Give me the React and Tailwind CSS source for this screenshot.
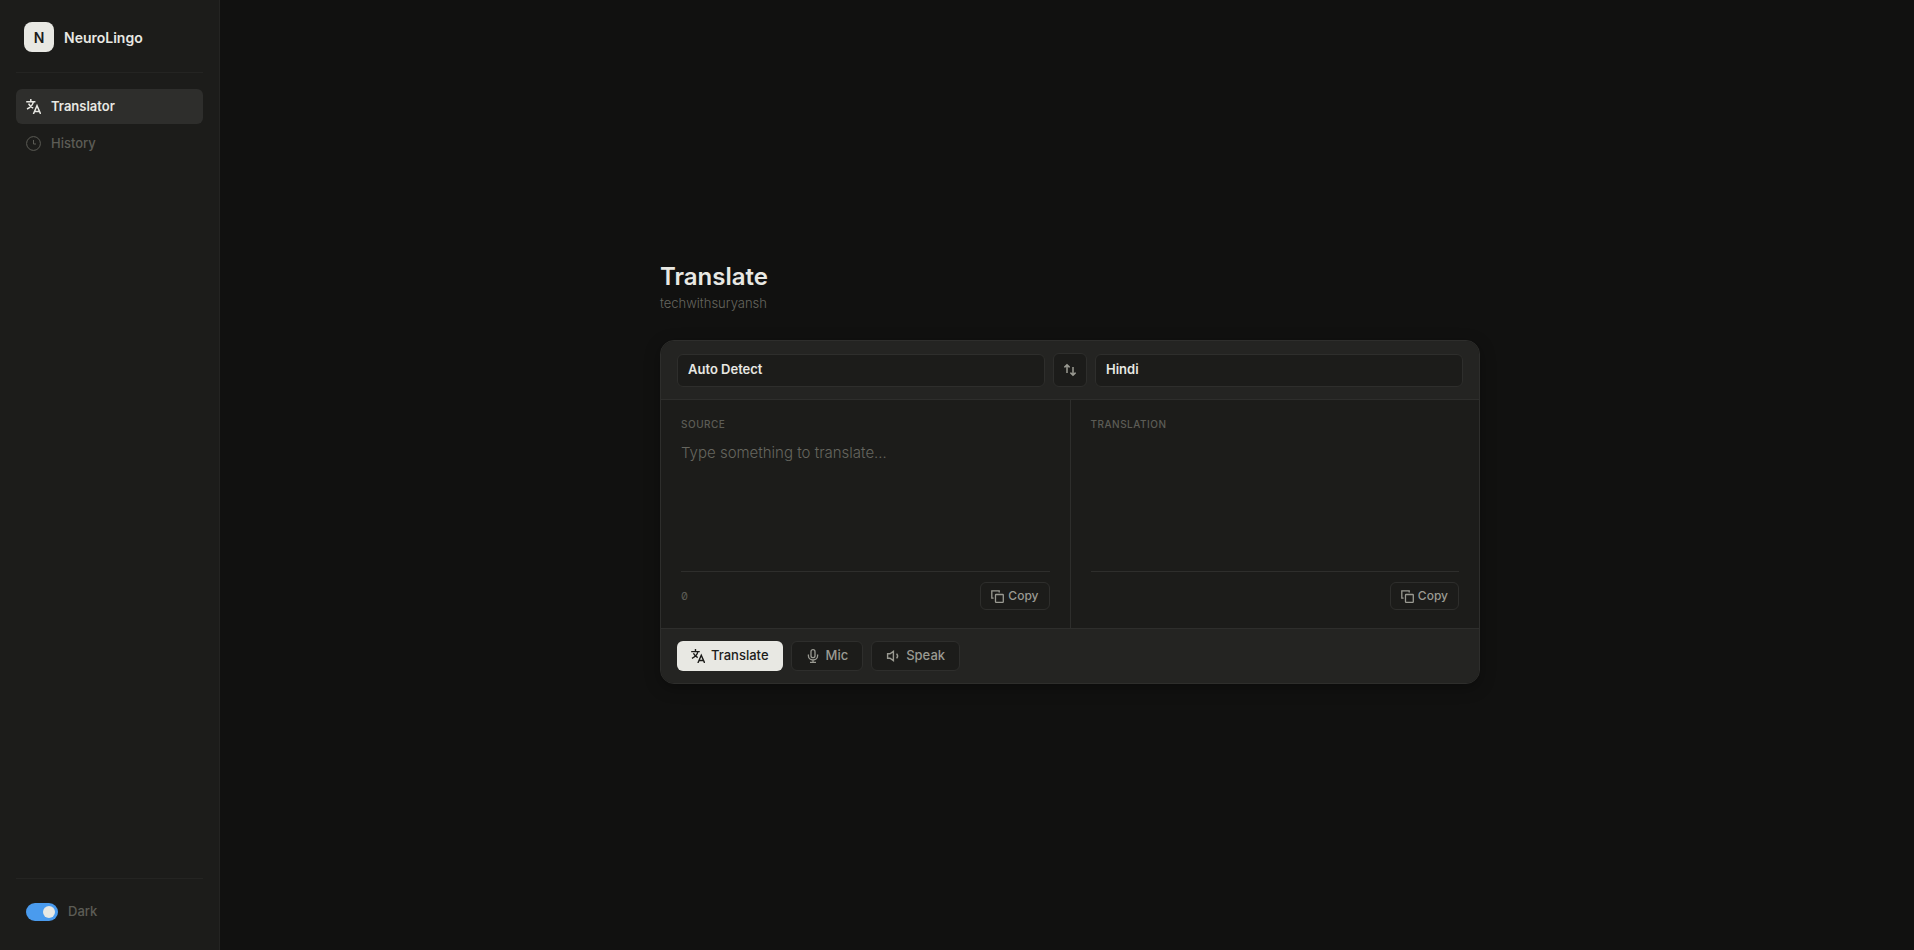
import React, { useState } from "react";

const TranslateIcon = ({ className }) => (
  <svg
    className={className}
    viewBox="0 0 15 15"
    fill="none"
    stroke="currentColor"
    strokeWidth="1.5"
    aria-hidden="true"
  >
    <path d="M4.8 0v2.8M0.2 2.8h9.2M7.4 2.8C6.8 5.6 4.4 8.4 1 10M2.6 4.6c.8 1.8 2.4 3.4 4.6 4.6" />
    <path d="M7.4 15l3.6-8.4L14.6 15M8.7 12.4h4.6" />
  </svg>
);

const ClockIcon = ({ className }) => (
  <svg
    className={className}
    viewBox="0 0 15 15"
    fill="none"
    stroke="currentColor"
    aria-hidden="true"
  >
    <circle cx="7.5" cy="7.5" r="6.9" />
    <path d="M7.5 4v4H10" />
  </svg>
);

const SwapIcon = ({ className }) => (
  <svg
    className={className}
    viewBox="0 0 14 14"
    fill="none"
    stroke="currentColor"
    strokeWidth="1.5"
    aria-hidden="true"
  >
    <path d="M4 10V2M1.4 4.4L4 1.8l2.6 2.6M10 4v8M7.4 9.6L10 12.2l2.6-2.6" />
  </svg>
);

const CopyIcon = ({ className }) => (
  <svg
    className={className}
    viewBox="0 0 13 13"
    fill="none"
    stroke="currentColor"
    strokeWidth="1.3"
    aria-hidden="true"
  >
    <rect x="4.5" y="4.5" width="7.8" height="7.8" rx="0.6" />
    <path d="M2.6 8.2H0.8V0.8h7.4v1.8" />
  </svg>
);

const MicIcon = ({ className }) => (
  <svg
    className={className}
    viewBox="0 0 14 14"
    fill="none"
    stroke="currentColor"
    strokeWidth="1.3"
    aria-hidden="true"
  >
    <rect x="5" y="0.7" width="4" height="8" rx="2" />
    <path d="M2.4 5.6v1.2a4.6 4.2 0 0 0 9.2 0V5.6M7 11v2.4M4 13.3h6" />
  </svg>
);

const SpeakerIcon = ({ className }) => (
  <svg
    className={className}
    viewBox="0 0 14 14"
    fill="none"
    stroke="currentColor"
    strokeWidth="1.4"
    aria-hidden="true"
  >
    <path d="M1.6 4.8h2.4L7.4 2.4v9.2L4 9.2H1.6z" />
    <path d="M10.6 4.6c1.2 1.4 1.2 3.4 0 4.8" />
  </svg>
);

const CopyButton = () => (
  <button
    type="button"
    className="flex h-7 items-center gap-1 rounded-md border border-[#2e2e2c] px-2.5 text-[12px] font-medium text-[#9a9a92]"
  >
    <CopyIcon className="size-[13px]" />
    Copy
  </button>
);

const LanguageSelect = ({ label, value, onChange, options }) => (
  <select
    aria-label={label}
    value={value}
    onChange={(e) => onChange(e.target.value)}
    className="h-[33px] min-w-0 flex-1 appearance-none rounded-md border border-[#2e2e2c] bg-[#1c1c1a] px-2.5 text-[13px] font-semibold text-[#e8e8e3] outline-none"
  >
    {options.map((option) => (
      <option key={option}>{option}</option>
    ))}
  </select>
);

const App = () => {
  const [dark, setDark] = useState(true);
  const [source, setSource] = useState("Auto Detect");
  const [target, setTarget] = useState("Hindi");
  const [text, setText] = useState("");

  return (
    <div className="flex min-h-screen bg-[#111110] font-['Inter',sans-serif] text-[#e8e8e3]">
      <aside className="flex w-[220px] shrink-0 flex-col border-r border-[#242422] bg-[#1c1c1a] px-4 pt-[22px] pb-[22px]">
        <div className="flex items-center gap-2.5 border-b border-[#242422] px-2 pb-5">
          <span className="flex size-[30px] items-center justify-center rounded-lg bg-[#e8e8e3] text-[14px] font-semibold text-[#1c1c1a]">
            N
          </span>
          <span className="text-[14px] font-semibold">NeuroLingo</span>
        </div>

        <nav className="mt-4 flex flex-col gap-0.5">
          <a
            href="#translator"
            className="flex h-[35px] items-center gap-2.5 rounded-md bg-[#2e2e2c] px-2.5 text-[13px] font-semibold"
          >
            <TranslateIcon className="size-[15px]" />
            Translator
          </a>
          <a
            href="#history"
            className="flex h-[35px] items-center gap-2.5 rounded-md px-2.5 text-[13px] font-medium text-[#5c5c56]"
          >
            <ClockIcon className="size-[15px]" />
            History
          </a>
        </nav>

        <div className="mt-auto border-t border-[#242422] px-2.5 pt-4">
          <label className="flex h-[33px] items-center gap-2.5 text-[13px] font-medium text-[#5c5c56]">
            <input
              type="checkbox"
              checked={dark}
              onChange={() => setDark(!dark)}
              className="flex h-[18px] w-8 appearance-none items-center rounded-full bg-[#3a3a37] px-[3px] before:size-3 before:rounded-full before:bg-[#e8e8e3] checked:justify-end checked:bg-[#4a9bee]"
            />
            Dark
          </label>
        </div>
      </aside>

      <main className="flex flex-1 flex-col items-center justify-center pr-10 pb-[5px] pl-[46px]">
        <div className="w-full max-w-[820px]">
          <h1 className="text-[24px] leading-8 font-semibold">Translate</h1>
          <p className="text-[13px] leading-5 font-light text-[#66665f]">techwithsuryansh</p>

          <section className="mt-[27px] overflow-hidden rounded-[14px] border border-[#2e2e2c] bg-[#1c1c1a] shadow-[0_4px_16px_rgba(0,0,0,0.3)]">
            <div className="flex items-center gap-2 border-b border-[#2e2e2c] bg-[#242422] px-4 py-3">
              <LanguageSelect
                label="Source language"
                value={source}
                onChange={setSource}
                options={["Auto Detect", "English", "Hindi"]}
              />
              <button
                type="button"
                aria-label="Swap languages"
                className="flex size-[34px] items-center justify-center rounded-md border border-[#2e2e2c] bg-[#1c1c1a] text-[#9a9a92]"
              >
                <SwapIcon className="size-3.5" />
              </button>
              <LanguageSelect
                label="Target language"
                value={target}
                onChange={setTarget}
                options={["Hindi", "English"]}
              />
            </div>

            <div className="grid grid-cols-[1fr_1px_1fr]">
              <div className="flex flex-col px-5 py-[18px]">
                <label
                  htmlFor="source-text"
                  className="text-[10px] leading-3 font-medium tracking-wider text-[#5c5c56] uppercase"
                >
                  Source
                </label>
                <textarea
                  id="source-text"
                  value={text}
                  onChange={(e) => setText(e.target.value)}
                  placeholder="Type something to translate…"
                  className="mt-2.5 h-[131px] resize-none bg-transparent text-[15px] leading-[26px] font-light outline-none placeholder:text-[#66665f]"
                />
                <div className="flex items-center justify-between border-t border-[#2e2e2c] pt-2.5">
                  <span className="text-[11px] text-[#5c5c56] slashed-zero">{text.length}</span>
                  <CopyButton />
                </div>
              </div>

              <div className="bg-[#2e2e2c]" />

              <div className="flex flex-col px-5 py-[18px]">
                <h2 className="text-[10px] leading-3 font-medium tracking-wider text-[#5c5c56] uppercase">
                  Translation
                </h2>
                <div className="mt-2.5 flex-1" />
                <div className="flex items-center justify-end border-t border-[#2e2e2c] pt-2.5">
                  <CopyButton />
                </div>
              </div>
            </div>

            <div className="flex gap-2 border-t border-[#2e2e2c] bg-[#242422] px-4 py-3">
              <button
                type="button"
                className="flex h-[30px] items-center gap-1.5 rounded-md bg-[#e8e8e3] px-3.5 text-[13px] font-medium text-[#1c1c1a]"
              >
                <TranslateIcon className="size-3.5" />
                Translate
              </button>
              <button
                type="button"
                className="flex h-[30px] items-center gap-1.5 rounded-md border border-[#2e2e2c] bg-[#1c1c1a] px-3.5 text-[13px] font-medium text-[#9a9a92]"
              >
                <MicIcon className="size-3.5" />
                Mic
              </button>
              <button
                type="button"
                className="flex h-[30px] items-center gap-1.5 rounded-md border border-[#2e2e2c] bg-[#1c1c1a] px-3.5 text-[13px] font-medium text-[#9a9a92]"
              >
                <SpeakerIcon className="size-3.5" />
                Speak
              </button>
            </div>
          </section>
        </div>
      </main>
    </div>
  );
};

export default App;
